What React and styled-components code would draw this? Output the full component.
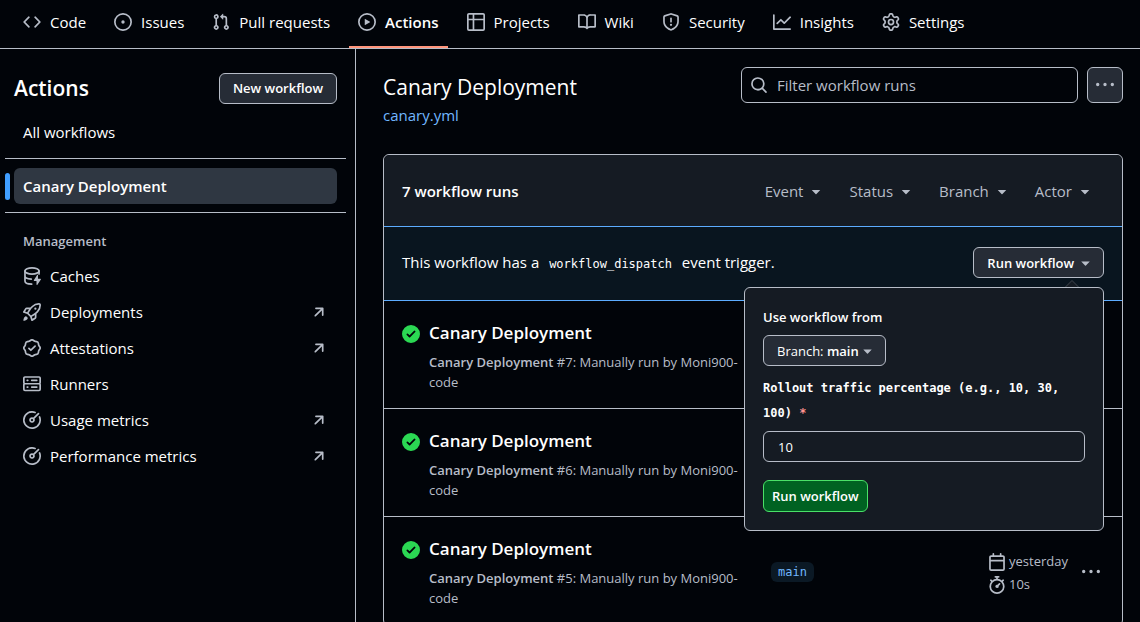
import React from "react";
import styled, { createGlobalStyle, css } from "styled-components";

const color = {
  canvas: "#010409",
  subtle: "#151b23",
  accentSubtle: "#09151f",
  border: "#b7bdc8",
  text: "#ffffff",
  muted: "#b7bdc8",
  link: "#71b7ff",
  accent: "#5cacff",
  control: "#262c36",
  selected: "#2f3742",
};

const GlobalStyle = createGlobalStyle`
  *, *::before, *::after { box-sizing: border-box; }
  html { scrollbar-width: none; background: ${color.canvas}; }
  body {
    margin: 0;
    background: ${color.canvas};
    color: ${color.text};
    font-family: "Open Sans", "Noto Sans", sans-serif;
    font-size: 15px;
    line-height: 24px;
  }
  button, input { font: inherit; color: inherit; margin: 0; }
  a { color: inherit; text-decoration: none; }
  h1, h2, h3, p, ul { margin: 0; padding: 0; }
  ul { list-style: none; }
`;

const ICONS = {
  code: "m11.28 3.22 4.25 4.25a.75.75 0 0 1 0 1.06l-4.25 4.25a.749.749 0 0 1-1.275-.326.749.749 0 0 1 .215-.734L13.94 8l-3.72-3.72a.749.749 0 0 1 .326-1.275.749.749 0 0 1 .734.215Zm-6.56 0a.751.751 0 0 1 1.042.018.751.751 0 0 1 .018 1.042L2.06 8l3.72 3.72a.749.749 0 0 1-.326 1.275.749.749 0 0 1-.734-.215L.47 8.53a.75.75 0 0 1 0-1.06Z",
  issue:
    "M8 9.5a1.5 1.5 0 1 0 0-3 1.5 1.5 0 0 0 0 3ZM8 0a8 8 0 1 1 0 16A8 8 0 0 1 8 0ZM1.5 8a6.5 6.5 0 1 0 13 0 6.5 6.5 0 0 0-13 0Z",
  pull: "M1.5 3.25a2.25 2.25 0 1 1 3 2.122v5.256a2.251 2.251 0 1 1-1.5 0V5.372A2.25 2.25 0 0 1 1.5 3.25Zm5.677-.177L9.573.677A.25.25 0 0 1 10 .854V2.5h1A2.5 2.5 0 0 1 13.5 5v5.628a2.251 2.251 0 1 1-1.5 0V5a1 1 0 0 0-1-1h-1v1.646a.25.25 0 0 1-.427.177L7.177 3.427a.25.25 0 0 1 0-.354ZM3.75 2.5a.75.75 0 1 0 0 1.5.75.75 0 0 0 0-1.5Zm0 9.5a.75.75 0 1 0 0 1.5.75.75 0 0 0 0-1.5Zm8.25.75a.75.75 0 1 0 1.5 0 .75.75 0 0 0-1.5 0Z",
  play: "M8 0a8 8 0 1 1 0 16A8 8 0 0 1 8 0ZM1.5 8a6.5 6.5 0 1 0 13 0 6.5 6.5 0 0 0-13 0Zm4.879-2.773 4.264 2.559a.25.25 0 0 1 0 .428l-4.264 2.559A.25.25 0 0 1 6 10.559V5.442a.25.25 0 0 1 .379-.215Z",
  table:
    "M0 1.75C0 .784.784 0 1.75 0h12.5C15.216 0 16 .784 16 1.75v12.5A1.75 1.75 0 0 1 14.25 16H1.75A1.75 1.75 0 0 1 0 14.25ZM6.5 6.5v8h7.75a.25.25 0 0 0 .25-.25V6.5Zm8-1.5V1.75a.25.25 0 0 0-.25-.25H6.5V5Zm-13 1.5v7.75c0 .138.112.25.25.25H5v-8ZM5 5V1.5H1.75a.25.25 0 0 0-.25.25V5Z",
  book: "M0 1.75A.75.75 0 0 1 .75 1h4.253c1.227 0 2.317.59 3 1.501A3.743 3.743 0 0 1 11.006 1h4.245a.75.75 0 0 1 .75.75v10.5a.75.75 0 0 1-.75.75h-4.507a2.25 2.25 0 0 0-1.591.659l-.622.621a.75.75 0 0 1-1.06 0l-.622-.621A2.25 2.25 0 0 0 5.258 13H.75a.75.75 0 0 1-.75-.75Zm7.251 10.324.004-5.073-.002-2.253A2.25 2.25 0 0 0 5.003 2.5H1.5v9h3.757a3.75 3.75 0 0 1 1.994.574ZM8.755 4.75l-.004 7.322a3.752 3.752 0 0 1 1.992-.572H14.5v-9h-3.495a2.25 2.25 0 0 0-2.25 2.25Z",
  shield:
    "M7.467.133a1.748 1.748 0 0 1 1.066 0l5.25 1.68A1.75 1.75 0 0 1 15 3.48V7c0 1.566-.32 3.182-1.303 4.682-.983 1.498-2.585 2.813-5.032 3.855a1.697 1.697 0 0 1-1.33 0c-2.447-1.042-4.049-2.357-5.032-3.855C1.32 10.182 1 8.566 1 7V3.48a1.75 1.75 0 0 1 1.217-1.667Zm.61 1.429a.25.25 0 0 0-.153 0l-5.25 1.68a.25.25 0 0 0-.174.238V7c0 1.358.275 2.666 1.057 3.86.784 1.194 2.121 2.34 4.366 3.297a.196.196 0 0 0 .154 0c2.245-.956 3.582-2.104 4.366-3.298C13.225 9.666 13.5 8.36 13.5 7V3.48a.251.251 0 0 0-.174-.237l-5.25-1.68ZM8.75 4.75v3a.75.75 0 0 1-1.5 0v-3a.75.75 0 0 1 1.5 0ZM9 10.5a1 1 0 1 1-2 0 1 1 0 0 1 2 0Z",
  graph:
    "M1.5 1.75V13.5h13.75a.75.75 0 0 1 0 1.5H.75a.75.75 0 0 1-.75-.75V1.75a.75.75 0 0 1 1.5 0Zm14.28 2.53-5.25 5.25a.75.75 0 0 1-1.06 0L7 7.06 4.28 9.78a.751.751 0 0 1-1.042-.018.751.751 0 0 1-.018-1.042l3.25-3.25a.75.75 0 0 1 1.06 0L10 7.94l4.72-4.72a.751.751 0 0 1 1.042.018.751.751 0 0 1 .018 1.042Z",
  gear: "M8 0a8.2 8.2 0 0 1 .701.031C9.444.095 9.99.645 10.16 1.29l.288 1.107c.018.066.079.158.212.224.231.114.454.243.668.386.123.082.233.09.299.071l1.103-.303c.644-.176 1.392.021 1.82.63.27.385.506.792.704 1.218.315.675.111 1.422-.364 1.891l-.814.806c-.049.048-.098.147-.088.294.016.257.016.515 0 .772-.01.147.038.246.088.294l.814.806c.475.469.679 1.216.364 1.891a7.977 7.977 0 0 1-.704 1.217c-.428.61-1.176.807-1.82.63l-1.102-.302c-.067-.019-.177-.011-.3.071a5.909 5.909 0 0 1-.668.386c-.133.066-.194.158-.211.224l-.29 1.106c-.168.646-.715 1.196-1.458 1.26a8.006 8.006 0 0 1-1.402 0c-.743-.064-1.289-.614-1.458-1.26l-.289-1.106c-.018-.066-.079-.158-.212-.224a5.738 5.738 0 0 1-.668-.386c-.123-.082-.233-.09-.299-.071l-1.103.303c-.644.176-1.392-.021-1.82-.63a8.12 8.12 0 0 1-.704-1.218c-.315-.675-.111-1.422.363-1.891l.815-.806c.05-.048.098-.147.088-.294a6.214 6.214 0 0 1 0-.772c.01-.147-.038-.246-.088-.294l-.815-.806C.635 6.045.431 5.298.746 4.623a7.92 7.92 0 0 1 .704-1.217c.428-.61 1.176-.807 1.82-.63l1.102.302c.067.019.177.011.3-.071.214-.143.437-.272.668-.386.133-.066.194-.158.211-.224l.29-1.106C6.009.645 6.556.095 7.299.03 7.53.01 7.764 0 8 0Zm-.571 1.525c-.036.003-.108.036-.137.146l-.289 1.105c-.147.561-.549.967-.998 1.189-.173.086-.34.183-.5.29-.417.278-.97.423-1.529.27l-1.103-.303c-.109-.03-.175.016-.195.045-.22.312-.412.644-.573.99-.014.031-.021.11.059.19l.815.806c.411.406.562.957.53 1.456a4.709 4.709 0 0 0 0 .582c.032.499-.119 1.05-.53 1.456l-.815.806c-.081.08-.073.159-.059.19.162.346.353.677.573.989.02.03.085.076.195.046l1.102-.303c.56-.153 1.113-.008 1.53.27.161.107.328.204.501.29.447.222.85.629.997 1.189l.289 1.105c.029.109.101.143.137.146a6.6 6.6 0 0 0 1.142 0c.036-.003.108-.036.137-.146l.289-1.105c.147-.561.549-.967.998-1.189.173-.086.34-.183.5-.29.417-.278.97-.423 1.529-.27l1.103.303c.109.029.175-.016.195-.045.22-.313.411-.644.573-.99.014-.031.021-.11-.059-.19l-.815-.806c-.411-.406-.562-.957-.53-1.456a4.709 4.709 0 0 0 0-.582c-.032-.499.119-1.05.53-1.456l.815-.806c.081-.08.073-.159.059-.19a6.464 6.464 0 0 0-.573-.989c-.02-.03-.085-.076-.195-.046l-1.102.303c-.56.153-1.113.008-1.53-.27a4.44 4.44 0 0 0-.501-.29c-.447-.222-.85-.629-.997-1.189l-.289-1.105c-.029-.11-.101-.143-.137-.146a6.6 6.6 0 0 0-1.142 0ZM11 8a3 3 0 1 1-6 0 3 3 0 0 1 6 0ZM9.5 8a1.5 1.5 0 1 0-3.001.001A1.5 1.5 0 0 0 9.5 8Z",
  rocket:
    "M14.064 0h.186C15.216 0 16 .784 16 1.75v.186a8.752 8.752 0 0 1-2.564 6.186l-.458.459c-.314.314-.641.616-.979.904v3.207c0 .608-.315 1.172-.833 1.49l-2.774 1.707a.749.749 0 0 1-1.11-.418l-.954-3.102a1.214 1.214 0 0 1-.145-.125L3.754 9.816a1.218 1.218 0 0 1-.124-.145L.528 8.717a.749.749 0 0 1-.418-1.11l1.71-2.774A1.748 1.748 0 0 1 3.31 4h3.204c.288-.338.59-.665.904-.979l.459-.458A8.749 8.749 0 0 1 14.064 0ZM8.938 3.623h-.002l-.458.458c-.76.76-1.437 1.598-2.02 2.5l-1.5 2.317 2.143 2.143 2.317-1.5c.902-.583 1.74-1.26 2.499-2.02l.459-.458a7.25 7.25 0 0 0 2.123-5.127V1.75a.25.25 0 0 0-.25-.25h-.186a7.249 7.249 0 0 0-5.125 2.123ZM3.56 14.56c-.732.732-2.334 1.045-3.005 1.148a.234.234 0 0 1-.201-.064.234.234 0 0 1-.064-.201c.103-.671.416-2.273 1.15-3.003a1.502 1.502 0 1 1 2.12 2.12Zm6.94-3.935c-.088.06-.177.118-.266.175l-2.35 1.521.548 1.783 1.949-1.2a.25.25 0 0 0 .119-.213ZM3.678 8.116 5.2 5.766c.058-.09.117-.178.176-.266H3.309a.25.25 0 0 0-.213.119l-1.2 1.95ZM12 5a1 1 0 1 1-2 0 1 1 0 0 1 2 0Z",
  verified:
    "m9.585.52.929.68c.153.112.331.186.518.215l1.138.175a2.678 2.678 0 0 1 2.24 2.24l.174 1.139c.029.187.103.365.215.518l.68.928a2.677 2.677 0 0 1 0 3.17l-.68.928a1.174 1.174 0 0 0-.215.518l-.175 1.138a2.678 2.678 0 0 1-2.241 2.241l-1.138.175a1.17 1.17 0 0 0-.518.215l-.928.68a2.677 2.677 0 0 1-3.17 0l-.928-.68a1.174 1.174 0 0 0-.518-.215L3.83 14.41a2.678 2.678 0 0 1-2.24-2.24l-.175-1.138a1.17 1.17 0 0 0-.215-.518l-.68-.928a2.677 2.677 0 0 1 0-3.17l.68-.928c.112-.153.186-.331.215-.518l.175-1.14a2.678 2.678 0 0 1 2.24-2.24l1.139-.175c.187-.029.365-.103.518-.215l.928-.68a2.677 2.677 0 0 1 3.17 0ZM7.303 1.728l-.927.68a2.67 2.67 0 0 1-1.18.489l-1.137.174a1.179 1.179 0 0 0-.987.987l-.174 1.136a2.677 2.677 0 0 1-.489 1.18l-.68.928a1.18 1.18 0 0 0 0 1.394l.68.927c.256.348.424.753.489 1.18l.174 1.137c.078.509.478.909.987.987l1.136.174a2.67 2.67 0 0 1 1.18.489l.928.68c.414.305.979.305 1.394 0l.927-.68a2.67 2.67 0 0 1 1.18-.489l1.137-.174a1.18 1.18 0 0 0 .987-.987l.174-1.136a2.67 2.67 0 0 1 .489-1.18l.68-.928a1.176 1.176 0 0 0 0-1.394l-.68-.927a2.686 2.686 0 0 1-.489-1.18l-.174-1.137a1.179 1.179 0 0 0-.987-.987l-1.136-.174a2.677 2.677 0 0 1-1.18-.489l-.928-.68a1.176 1.176 0 0 0-1.394 0ZM11.28 6.78l-3.75 3.75a.75.75 0 0 1-1.06 0L4.72 8.78a.751.751 0 0 1 .018-1.042.751.751 0 0 1 1.042-.018L7 8.94l3.22-3.22a.751.751 0 0 1 1.042.018.751.751 0 0 1 .018 1.042Z",
  server:
    "M1.75 1h12.5c.966 0 1.75.784 1.75 1.75v4c0 .372-.116.717-.314 1 .198.283.314.628.314 1v4a1.75 1.75 0 0 1-1.75 1.75H1.75A1.75 1.75 0 0 1 0 12.75v-4c0-.358.109-.707.314-1a1.739 1.739 0 0 1-.314-1v-4C0 1.784.784 1 1.75 1ZM1.5 2.75v4c0 .138.112.25.25.25h12.5a.25.25 0 0 0 .25-.25v-4a.25.25 0 0 0-.25-.25H1.75a.25.25 0 0 0-.25.25Zm.25 5.75a.25.25 0 0 0-.25.25v4c0 .138.112.25.25.25h12.5a.25.25 0 0 0 .25-.25v-4a.25.25 0 0 0-.25-.25ZM7 4.75A.75.75 0 0 1 7.75 4h4.5a.75.75 0 0 1 0 1.5h-4.5A.75.75 0 0 1 7 4.75ZM7.75 10h4.5a.75.75 0 0 1 0 1.5h-4.5a.75.75 0 0 1 0-1.5ZM3 4.75A.75.75 0 0 1 3.75 4h.5a.75.75 0 0 1 0 1.5h-.5A.75.75 0 0 1 3 4.75ZM3.75 10h.5a.75.75 0 0 1 0 1.5h-.5a.75.75 0 0 1 0-1.5Z",
  meter:
    "M8 1.5a6.5 6.5 0 1 0 6.016 4.035.75.75 0 0 1 1.388-.57 8 8 0 1 1-4.37-4.37.75.75 0 0 1-.569 1.389A6.473 6.473 0 0 0 8 1.5Zm6.28.22a.75.75 0 0 1 0 1.06l-4.063 4.064a2.5 2.5 0 1 1-1.06-1.06L13.22 1.72a.75.75 0 0 1 1.06 0ZM7 8a1 1 0 1 0 2 0 1 1 0 0 0-2 0Z",
  external:
    "M4.53 4.75A.75.75 0 0 1 5.28 4h6.01a.75.75 0 0 1 .75.75v6.01a.75.75 0 0 1-1.5 0v-4.2l-5.26 5.261a.749.749 0 0 1-1.275-.326.749.749 0 0 1 .215-.734L9.48 5.5h-4.2a.75.75 0 0 1-.75-.75Z",
  search:
    "M10.68 11.74a6 6 0 0 1-7.922-8.982 6 6 0 0 1 8.982 7.922l3.04 3.04a.749.749 0 0 1-.326 1.275.749.749 0 0 1-.734-.215ZM11.5 7a4.499 4.499 0 1 0-8.997 0A4.499 4.499 0 0 0 11.5 7Z",
  kebab:
    "M8 9a1.5 1.5 0 1 0 0-3 1.5 1.5 0 0 0 0 3ZM1.5 9a1.5 1.5 0 1 0 0-3 1.5 1.5 0 0 0 0 3Zm13 0a1.5 1.5 0 1 0 0-3 1.5 1.5 0 0 0 0 3Z",
  success:
    "M8 16A8 8 0 1 1 8 0a8 8 0 0 1 0 16Zm3.78-9.72a.751.751 0 0 0-.018-1.042.751.751 0 0 0-1.042-.018L6.75 9.19 5.28 7.72a.751.751 0 0 0-1.042.018.751.751 0 0 0-.018 1.042l2 2a.75.75 0 0 0 1.06 0Z",
  calendar:
    "M4.75 0a.75.75 0 0 1 .75.75V2h5V.75a.75.75 0 0 1 1.5 0V2h1.25c.966 0 1.75.784 1.75 1.75v10.5A1.75 1.75 0 0 1 13.25 16H2.75A1.75 1.75 0 0 1 1 14.25V3.75C1 2.784 1.784 2 2.75 2H4V.75A.75.75 0 0 1 4.75 0ZM2.5 7.5v6.75c0 .138.112.25.25.25h10.5a.25.25 0 0 0 .25-.25V7.5Zm10.75-4H2.75a.25.25 0 0 0-.25.25V6h11V3.75a.25.25 0 0 0-.25-.25Z",
  stopwatch:
    "M5.75.75A.75.75 0 0 1 6.5 0h3a.75.75 0 0 1 0 1.5h-.75v1l-.001.041a6.724 6.724 0 0 1 3.464 1.435l.007-.006.75-.75a.749.749 0 0 1 1.275.326.749.749 0 0 1-.215.734l-.75.75-.006.007a6.75 6.75 0 1 1-10.548 0L2.72 5.03l-.75-.75a.751.751 0 0 1 .018-1.042.751.751 0 0 1 1.042-.018l.75.75.007.006A6.72 6.72 0 0 1 7.25 2.541V1.5H6.5a.75.75 0 0 1-.75-.75ZM8 14.5A5.25 5.25 0 1 0 8 4a5.25 5.25 0 0 0 0 10.5Zm.389-6.7 1.33-1.33a.75.75 0 1 1 1.061 1.06L9.45 8.861A1.503 1.503 0 0 1 8 10.75a1.499 1.499 0 1 1 .389-2.95Z",
  caret:
    "m4.427 7.427 3.396 3.396a.25.25 0 0 0 .354 0l3.396-3.396A.25.25 0 0 0 11.396 7H4.604a.25.25 0 0 0-.177.427Z",
};

const Svg = styled.svg`
  display: block;
  flex: none;
  width: 18px;
  height: 18px;
  fill: ${(p) => p.$color || color.muted};
`;

const CaretSvg = styled(Svg)`
  width: 9px;
  height: 9px;
`;

function Caret() {
  return (
    <CaretSvg viewBox="4 4 8 8" aria-hidden="true">
      <path d={ICONS.caret} />
    </CaretSvg>
  );
}

function Icon({ name, tint }) {
  if (name === "cache") {
    return (
      <Svg viewBox="0 0 16 16" aria-hidden="true">
        <g fill="none" stroke={color.muted} strokeWidth="1.5" strokeLinecap="round">
          <ellipse cx="8" cy="3.5" rx="6.25" ry="2.75" />
          <path d="M1.75 3.5v9c0 1.5 2.6 2.7 6 2.75M1.75 8c0 1.4 2.3 2.6 5.6 2.75M14.25 3.5v2.7" />
        </g>
        <path d="M13.3 7.2v3.3h2.2c.4 0 .6.4.4.7l-3.1 4.6c-.25.4-.8.2-.8-.25v-3.05h-2c-.4 0-.6-.4-.4-.7l3-4.8c.2-.35.7-.2.7.2Z" />
      </Svg>
    );
  }
  return (
    <Svg viewBox="0 0 16 16" aria-hidden="true" $color={tint}>
      <path d={ICONS[name]} />
    </Svg>
  );
}

const RepoNav = styled.nav`
  display: flex;
  gap: 10px;
  height: 49px;
  padding: 0 14px;
  border-bottom: 1px solid ${color.border};
`;

const NavTab = styled.a`
  display: flex;
  align-items: center;
  gap: 9px;
  padding: 0 9px 4px;
  white-space: nowrap;
  font-weight: ${(p) => (p.$active ? 600 : 400)};
  box-shadow: ${(p) => (p.$active ? "inset 0 -2px #ff967d" : "none")};
`;

const Layout = styled.div`
  display: grid;
  grid-template-columns: 356px minmax(0, 1fr);
  min-height: calc(100vh - 49px);
`;

const Sidebar = styled.aside`
  padding: 23px 9px 24px 5px;
  border-right: 1px solid ${color.border};
`;

const SidebarHeader = styled.div`
  display: flex;
  align-items: center;
  justify-content: space-between;
  padding: 0 9px;
  margin-bottom: 10px;
`;

const SidebarTitle = styled.h2`
  font-size: 21px;
  line-height: 32px;
  font-weight: 600;
`;

const Button = styled.button`
  display: inline-flex;
  align-items: center;
  justify-content: center;
  gap: 7px;
  height: 31px;
  padding: 0 13px;
  border: 1px solid ${color.border};
  border-radius: 6px;
  background: ${color.control};
  font-size: 13px;
  font-weight: 600;
  white-space: nowrap;
  ${(p) =>
    p.$primary &&
    css`
      height: 32px;
      padding: 0 8px;
      border-color: #4ae168;
      background: #006222;
    `}
  ${(p) =>
    p.$square &&
    css`
      width: 36px;
      height: 36px;
      padding: 0;
    `}
  ${(p) =>
    p.$regular &&
    css`
      gap: 4px;
      font-weight: 400;
      b {
        font-weight: 600;
      }
    `}
`;

const NavGroup = styled.ul`
  padding: ${(p) => (p.$first ? "0 9px 8px" : "9px 9px 8px")};
  border-bottom: ${(p) => (p.$last ? "none" : `1px solid ${color.border}`)};
`;

const NavRow = styled.a`
  position: relative;
  display: flex;
  align-items: center;
  gap: 9px;
  height: 36px;
  padding: 0 9px;
  border-radius: 6px;
  ${(p) =>
    p.$active &&
    css`
      background: ${color.selected};
      font-weight: 600;
      &::before {
        content: "";
        position: absolute;
        left: -9px;
        top: 5px;
        bottom: 4px;
        width: 5px;
        border-radius: 4px;
        background: #409eff;
      }
    `}
`;

const NavLabel = styled.span`
  flex: 1;
`;

const GroupTitle = styled.h3`
  padding: 7px 9px 5px;
  font-size: 13px;
  font-weight: 600;
  color: ${color.muted};
`;

const Main = styled.main`
  padding: 18px 17px 0 27px;
`;

const PageHeader = styled.header`
  display: flex;
  align-items: flex-start;
  justify-content: space-between;
  gap: 9px;
  height: 87px;
`;

const PageTitle = styled.h1`
  font-size: 21px;
  line-height: 40px;
  font-weight: 400;
`;

const FileLink = styled.a`
  display: block;
  line-height: 16px;
  color: ${color.link};
`;

const HeaderTools = styled.div`
  display: flex;
  gap: 9px;
`;

const SearchField = styled.label`
  display: flex;
  align-items: center;
  gap: 9px;
  width: 337px;
  height: 36px;
  padding: 0 8px;
  border: 1px solid ${color.border};
  border-radius: 6px;
`;

const SearchInput = styled.input`
  flex: 1;
  min-width: 0;
  padding: 0;
  border: 0;
  outline: 0;
  background: transparent;
  &::placeholder {
    color: ${color.muted};
    opacity: 1;
  }
`;

const RunsBox = styled.section`
  border: 1px solid ${color.border};
  border-radius: 6px;
`;

const RunsHeader = styled.div`
  display: flex;
  align-items: center;
  justify-content: space-between;
  height: 71px;
  padding: 0 28px 0 18px;
  border-radius: 6px 6px 0 0;
  background: ${color.subtle};
`;

const RunsCount = styled.strong`
  font-weight: 600;
`;

const Filters = styled.div`
  display: flex;
  gap: 24px;
`;

const FilterButton = styled.button`
  display: flex;
  align-items: center;
  gap: 4px;
  padding: 0;
  border: 0;
  background: transparent;
  color: ${color.muted};
`;

const DispatchBanner = styled.div`
  display: flex;
  align-items: center;
  justify-content: space-between;
  height: 75px;
  padding: 0 18px 2px;
  border-top: 1px solid ${color.accent};
  border-bottom: 1px solid ${color.accent};
  background: ${color.accentSubtle};
`;

const Code = styled.code`
  padding: 0 6px;
  font-family: "DejaVu Sans Mono", monospace;
  font-size: 12px;
`;

const RunMenu = styled.div`
  position: relative;
  display: flex;
`;

const Popover = styled.form`
  position: absolute;
  z-index: 1;
  top: 40px;
  right: 0;
  display: flex;
  flex-direction: column;
  align-items: flex-start;
  width: 360px;
  padding: 17px 18px 18px;
  border: 1px solid ${color.border};
  border-radius: 6px;
  background: ${color.subtle};
`;

const PopoverTip = styled.svg`
  position: absolute;
  right: 23px;
  bottom: 100%;
  width: 16px;
  height: 8px;
`;

const PopoverTitle = styled.p`
  margin-bottom: 6px;
  font-size: 13px;
  font-weight: 600;
`;

const FieldLabel = styled.label`
  margin: 10px 0 5px;
  font-family: "DejaVu Sans Mono", monospace;
  font-size: 12px;
  line-height: 25px;
  font-weight: 700;
`;

const Required = styled.span`
  color: #ff9492;
`;

const TextInput = styled.input`
  width: 100%;
  height: 31px;
  margin-bottom: 18px;
  padding: 0 14px;
  border: 1px solid ${color.border};
  border-radius: 6px;
  outline: 0;
  background: ${color.subtle};
  font-size: 13px;
`;

const RunRow = styled.li`
  display: grid;
  grid-template-columns: minmax(0, 1fr) 217px 94px 22px;
  height: 108px;
  padding: 18px;
  border-bottom: 1px solid ${color.border};
`;

const RunInfo = styled.div`
  display: grid;
  grid-template-columns: 18px minmax(0, 1fr);
  column-gap: 9px;
  padding-right: 18px;
`;

const RunStatus = styled.span`
  padding-top: 6px;
`;

const RunTitle = styled.a`
  display: block;
  font-size: 17px;
  line-height: 28px;
  font-weight: 600;
`;

const RunDetail = styled.p`
  margin-top: 5px;
  font-size: 13px;
  line-height: 20px;
  color: ${color.muted};
  strong {
    font-weight: 600;
  }
`;

const BranchCell = styled.div`
  display: flex;
  align-items: center;
`;

const BranchBadge = styled.a`
  padding: 0 7px;
  border-radius: 6px;
  background: #0b1925;
  color: ${color.link};
  font-family: "DejaVu Sans Mono", monospace;
  font-size: 12px;
  line-height: 20px;
`;

const TimeCell = styled.div`
  display: flex;
  flex-direction: column;
  justify-content: center;
  padding-top: 3px;
`;

const TimeLine = styled.span`
  display: flex;
  align-items: center;
  gap: 3px;
  font-size: 13px;
  line-height: 23px;
  color: ${color.muted};
`;

const RowMenuButton = styled.button`
  align-self: center;
  padding: 0;
  border: 0;
  background: transparent;
`;

const tabs = [
  ["code", "Code"],
  ["issue", "Issues"],
  ["pull", "Pull requests"],
  ["play", "Actions"],
  ["table", "Projects"],
  ["book", "Wiki"],
  ["shield", "Security"],
  ["graph", "Insights"],
  ["gear", "Settings"],
];

const management = [
  { icon: "cache", label: "Caches" },
  { icon: "rocket", label: "Deployments", external: true },
  { icon: "verified", label: "Attestations", external: true },
  { icon: "server", label: "Runners" },
  { icon: "meter", label: "Usage metrics", external: true },
  { icon: "meter", label: "Performance metrics", external: true },
];

const runs = [
  { number: 7 },
  { number: 6 },
  { number: 5, branch: "main", when: "yesterday", duration: "10s" },
];

function Run({ number, branch, when, duration }) {
  return (
    <RunRow>
      <RunInfo>
        <RunStatus>
          <Icon name="success" tint="#2bd853" />
        </RunStatus>
        <div>
          <RunTitle href="#">Canary Deployment</RunTitle>
          <RunDetail>
            <strong>Canary Deployment</strong>
            {` #${number}: Manually run by Moni900-code`}
          </RunDetail>
        </div>
      </RunInfo>
      {branch && (
        <>
          <BranchCell>
            <BranchBadge href="#">{branch}</BranchBadge>
          </BranchCell>
          <TimeCell>
            <TimeLine>
              <Icon name="calendar" />
              {when}
            </TimeLine>
            <TimeLine>
              <Icon name="stopwatch" />
              {duration}
            </TimeLine>
          </TimeCell>
          <RowMenuButton type="button" aria-label="Show options">
            <Icon name="kebab" />
          </RowMenuButton>
        </>
      )}
    </RunRow>
  );
}

export default function App() {
  return (
    <>
      <GlobalStyle />
      <RepoNav aria-label="Repository">
        {tabs.map(([icon, label]) => (
          <NavTab key={label} href="#" $active={label === "Actions"}>
            <Icon name={icon} />
            {label}
          </NavTab>
        ))}
      </RepoNav>
      <Layout>
        <Sidebar>
          <SidebarHeader>
            <SidebarTitle>Actions</SidebarTitle>
            <Button type="button">New workflow</Button>
          </SidebarHeader>
          <NavGroup $first>
            <li>
              <NavRow href="#">
                <NavLabel>All workflows</NavLabel>
              </NavRow>
            </li>
          </NavGroup>
          <NavGroup>
            <li>
              <NavRow href="#" $active>
                <NavLabel>Canary Deployment</NavLabel>
              </NavRow>
            </li>
          </NavGroup>
          <NavGroup $last>
            <li>
              <GroupTitle>Management</GroupTitle>
            </li>
            {management.map((item) => (
              <li key={item.label}>
                <NavRow href="#">
                  <Icon name={item.icon} />
                  <NavLabel>{item.label}</NavLabel>
                  {item.external && <Icon name="external" />}
                </NavRow>
              </li>
            ))}
          </NavGroup>
        </Sidebar>
        <Main>
          <PageHeader>
            <div>
              <PageTitle>Canary Deployment</PageTitle>
              <FileLink href="#">canary.yml</FileLink>
            </div>
            <HeaderTools>
              <SearchField>
                <Icon name="search" />
                <SearchInput
                  type="text"
                  placeholder="Filter workflow runs"
                  aria-label="Filter workflow runs"
                />
              </SearchField>
              <Button type="button" $square aria-label="Show workflow options">
                <Icon name="kebab" />
              </Button>
            </HeaderTools>
          </PageHeader>
          <RunsBox>
            <RunsHeader>
              <RunsCount>7 workflow runs</RunsCount>
              <Filters>
                {["Event", "Status", "Branch", "Actor"].map((name) => (
                  <FilterButton key={name} type="button">
                    {name}
                    <Icon name="caret" />
                  </FilterButton>
                ))}
              </Filters>
            </RunsHeader>
            <DispatchBanner>
              <p>
                This workflow has a <Code>workflow_dispatch</Code> event trigger.
              </p>
              <RunMenu>
                <Button type="button" aria-expanded="true">
                  Run workflow
                  <Caret />
                </Button>
                <Popover onSubmit={(e) => e.preventDefault()}>
                  <PopoverTip viewBox="0 0 16 8" aria-hidden="true">
                    <path d="M0 8 8 0l8 8Z" fill={color.subtle} />
                    <path d="M1 7.5 8 .5l7 7" fill="none" stroke="#3d444d" />
                    <path d="M0 7.5h16" stroke={color.border} />
                  </PopoverTip>
                  <PopoverTitle>Use workflow from</PopoverTitle>
                  <Button type="button" $regular>
                    <span>
                      Branch: <b>main</b>
                    </span>
                    <Caret />
                  </Button>
                  <FieldLabel htmlFor="rollout">
                    Rollout traffic percentage (e.g., 10, 30, 100) <Required>*</Required>
                  </FieldLabel>
                  <TextInput id="rollout" type="text" defaultValue="10" />
                  <Button type="submit" $primary>
                    Run workflow
                  </Button>
                </Popover>
              </RunMenu>
            </DispatchBanner>
            <ul>
              {runs.map((run) => (
                <Run key={run.number} {...run} />
              ))}
            </ul>
          </RunsBox>
        </Main>
      </Layout>
    </>
  );
}
